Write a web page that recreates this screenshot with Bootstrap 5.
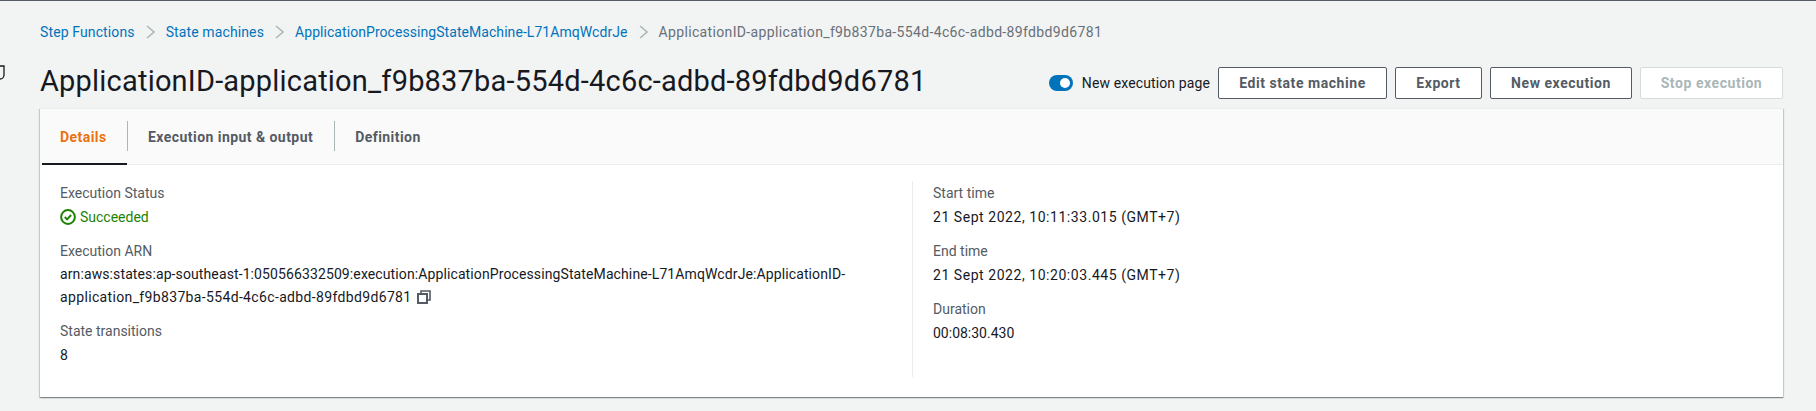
<!DOCTYPE html>
<html lang="en">
<head>
<meta charset="utf-8">
<title>Execution details</title>
<link href="https://cdn.jsdelivr.net/npm/bootstrap@5.3.0/dist/css/bootstrap.min.css" rel="stylesheet">
<style>
html,body{height:411px;overflow:hidden}
body{background:#f2f3f3;font-family:Roboto,"Liberation Sans",sans-serif;font-size:14px;line-height:22px;color:#16191f;border-top:1px solid #545b64;position:relative}
.edge-mark{position:absolute;left:-6px;top:63px}
.crumbs{padding:15px 40px 0;height:47px;margin:0}
.crumbs a{color:#0073bb;text-decoration:none;letter-spacing:.12px}
.crumbs a.long-crumb{letter-spacing:.06px}
.crumbs .here{color:#687078;letter-spacing:.35px}
.crumbs svg{margin:0 11px;flex:none}
.head-row{padding:0 33px 0 40px;height:60px}
.head-row h1{font-family:inherit;font-size:29px;line-height:40px;font-weight:400;margin:13px 0 0;color:#16191f;letter-spacing:.2px}
.head-actions{margin-top:19px}
.switch-track{width:24px;height:16px;border-radius:8px;background:#0073bb;position:relative;display:block;margin-right:9px}
.switch-track::after{content:"";position:absolute;right:3px;top:3px;width:10px;height:10px;border-radius:50%;background:#fff}
.switch-label{margin-right:8px;color:#16191f;letter-spacing:.12px}
.aws-btn{height:32px;border:1px solid #545b64;border-radius:2px;background:#fff;color:#545b64;font-weight:700;font-size:14px;line-height:30px;padding:0;margin-left:8px;text-align:center;letter-spacing:.55px}
.aws-btn:disabled{opacity:1;border-color:#d5dbdb;color:#aab7b8;background:#fff}
.w-edit{width:169px;margin-left:0}.w-export{width:87px}.w-new{width:142px}.w-stop{width:143px}
.panel{margin:0 33px 0 40px;height:289px;border:0;border-radius:0;background:#fff;box-shadow:0 1px 1px 0 rgba(0,28,36,.3),1px 1px 1px 0 rgba(0,28,36,.15),-1px 1px 1px 0 rgba(0,28,36,.15)}
.tab-strip{height:57px;background:#fafafa;border-bottom:1px solid #eaeded;padding:0 0 0 2px;border-top:1px solid #eaeded}
.tab-item{position:relative;height:56px;display:flex;align-items:center;font-weight:700;color:#545b64;text-decoration:none;padding:0 21px 0 20px;letter-spacing:.45px}
.tab-item.active-tab{color:#ec7211;width:85px;padding:0 18px}
.tab-item.active-tab::after{content:"";position:absolute;left:0;right:0;bottom:0;height:2px;background:#16191f}
.tab-sep{width:1px;height:30px;background:#aab7b8;align-self:flex-start;margin-top:12px}
.info-body{padding:16px 20px 0}
.info-left{width:852px;padding-right:20px;flex:none}
.info-right{border-left:1px solid #eaeded;padding-left:20px;height:196px;flex:1}
.info-label{color:#545b64;line-height:24px}
.info-label.spaced{margin-top:10px}
.info-val{line-height:24px}
.info-val.arn{line-height:23px;padding-bottom:10px;letter-spacing:.11px}
.arn-tail{letter-spacing:.35px}
.time-val{letter-spacing:.55px}
.status-ok{color:#1d8102}
.status-ok svg{margin-right:4px;vertical-align:-3px}
.copy-ic{margin-left:5px;vertical-align:-2px}
</style>
</head>
<body>
<svg class="edge-mark" width="12" height="18" viewBox="0 0 12 18" aria-hidden="true"><path d="M3 2h7v9a4 4 0 0 1-4 4H5" fill="none" stroke="#16191f" stroke-width="1.3"/></svg>

<nav class="crumbs d-flex align-items-center" aria-label="Breadcrumbs">
  <a href="#">Step Functions</a>
  <svg width="9" height="14" viewBox="0 0 9 14" aria-hidden="true"><path d="M1 1l7 6-7 6" fill="none" stroke="#aab7b8" stroke-width="1.5"/></svg>
  <a href="#">State machines</a>
  <svg width="9" height="14" viewBox="0 0 9 14" aria-hidden="true"><path d="M1 1l7 6-7 6" fill="none" stroke="#aab7b8" stroke-width="1.5"/></svg>
  <a class="long-crumb" href="#">ApplicationProcessingStateMachine-L71AmqWcdrJe</a>
  <svg width="9" height="14" viewBox="0 0 9 14" aria-hidden="true"><path d="M1 1l7 6-7 6" fill="none" stroke="#aab7b8" stroke-width="1.5"/></svg>
  <span class="here">ApplicationID-application_f9b837ba-554d-4c6c-adbd-89fdbd9d6781</span>
</nav>

<div class="head-row d-flex align-items-start justify-content-between">
  <h1>ApplicationID-application_f9b837ba-554d-4c6c-adbd-89fdbd9d6781</h1>
  <div class="head-actions d-flex align-items-center">
    <span class="switch-track"></span>
    <span class="switch-label">New execution page</span>
    <button class="btn aws-btn w-edit" type="button">Edit state machine</button>
    <button class="btn aws-btn w-export" type="button">Export</button>
    <button class="btn aws-btn w-new" type="button">New execution</button>
    <button class="btn aws-btn w-stop" type="button" disabled>Stop execution</button>
  </div>
</div>

<section class="card panel">
  <div class="tab-strip d-flex">
    <a class="tab-item active-tab" href="#">Details</a>
    <span class="tab-sep"></span>
    <a class="tab-item" href="#">Execution input &amp; output</a>
    <span class="tab-sep"></span>
    <a class="tab-item" href="#">Definition</a>
  </div>
  <div class="info-body d-flex">
    <div class="info-left">
      <div class="info-label">Execution Status</div>
      <div class="info-val status-ok"><svg width="16" height="16" viewBox="0 0 16 16" aria-hidden="true"><circle cx="8" cy="8" r="6.9" fill="none" stroke="#1d8102" stroke-width="2"/><path d="M4.8 8l2.3 2.4 4-4.4" fill="none" stroke="#1d8102" stroke-width="2"/></svg>Succeeded</div>
      <div class="info-label spaced">Execution ARN</div>
      <div class="info-val arn">arn:aws:states:ap-southeast-1:050566332509:execution:ApplicationProcessingStateMachine-L71AmqWcdrJe:ApplicationID-<br><span class="arn-tail">application_f9b837ba-554d-4c6c-adbd-89fdbd9d6781</span><svg class="copy-ic" width="14" height="14" viewBox="0 0 14 14" aria-hidden="true"><path d="M4 4V1h9v9h-3" fill="none" stroke="#545b64" stroke-width="1.6"/><rect x="1" y="4" width="9" height="9" fill="none" stroke="#545b64" stroke-width="2"/></svg></div>
      <div class="info-label">State transitions</div>
      <div class="info-val">8</div>
    </div>
    <div class="info-right">
      <div class="info-label">Start time</div>
      <div class="info-val time-val">21 Sept 2022, 10:11:33.015 (GMT+7)</div>
      <div class="info-label spaced">End time</div>
      <div class="info-val time-val">21 Sept 2022, 10:20:03.445 (GMT+7)</div>
      <div class="info-label spaced">Duration</div>
      <div class="info-val">00:08:30.430</div>
    </div>
  </div>
</section>
</body>
</html>
